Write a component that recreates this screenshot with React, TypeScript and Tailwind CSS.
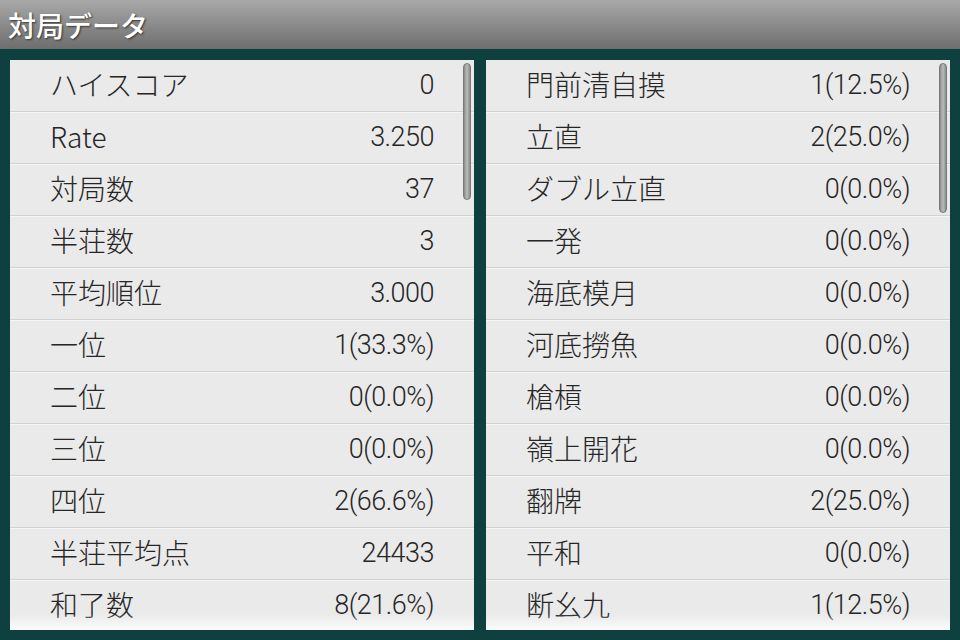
const left: [string, string][] = [
  ["ハイスコア", "0"],
  ["Rate", "3.250"],
  ["対局数", "37"],
  ["半荘数", "3"],
  ["平均順位", "3.000"],
  ["一位", "1(33.3%)"],
  ["二位", "0(0.0%)"],
  ["三位", "0(0.0%)"],
  ["四位", "2(66.6%)"],
  ["半荘平均点", "24433"],
  ["和了数", "8(21.6%)"],
];

const right: [string, string][] = [
  ["門前清自摸", "1(12.5%)"],
  ["立直", "2(25.0%)"],
  ["ダブル立直", "0(0.0%)"],
  ["一発", "0(0.0%)"],
  ["海底模月", "0(0.0%)"],
  ["河底撈魚", "0(0.0%)"],
  ["槍槓", "0(0.0%)"],
  ["嶺上開花", "0(0.0%)"],
  ["翻牌", "2(25.0%)"],
  ["平和", "0(0.0%)"],
  ["断幺九", "1(12.5%)"],
];

function Panel({ rows, thumb }: { rows: [string, string][]; thumb: string }) {
  return (
    <div className="relative flex-1 overflow-hidden bg-[#eaeaea]">
      {rows.map(([label, value]) => (
        <div
          key={label}
          className="flex h-[52px] shrink-0 items-center justify-between border-b border-[#d2d2d2] pl-10 pr-10 shadow-[0_1px_0_#f6f6f6]"
        >
          <span className="-mt-[4px] text-[28px] leading-none">{label}</span>
          <span className="font-['Roboto','Noto_Sans_CJK_JP',sans-serif] leading-none tracking-[-0.5px]">{value}</span>
        </div>
      ))}
      <div className="pointer-events-none absolute inset-x-0 bottom-0 h-[16px] bg-gradient-to-b from-transparent to-[#fbfbfb]" />
      <div
        className={`absolute right-[3px] top-[3px] w-[8px] rounded-full border border-[#7a7a7a] bg-gradient-to-r from-[#8a8a8a] via-[#bdbdbd] to-[#8a8a8a] ${thumb}`}
      />
    </div>
  );
}

export default function App() {
  return (
    <div className="flex h-[640px] w-[960px] flex-col bg-[#0e4040] font-['Noto_Sans_CJK_JP','Roboto',sans-serif] text-[27px] font-light text-[#262626]">
      <div className="flex h-[49px] shrink-0 items-center bg-gradient-to-b from-[#a9a9a9] to-[#6e6e6e] pl-[8px]">
        <h1 className="text-[28px] font-medium text-white [text-shadow:1px_1px_2px_#333]">対局データ</h1>
      </div>
      <div className="flex min-h-0 flex-1 gap-[12px] pb-[10px] pl-[10px] pr-[10px] pt-[11px]">
        <Panel rows={left} thumb="h-[137px]" />
        <Panel rows={right} thumb="h-[150px]" />
      </div>
    </div>
  );
}
